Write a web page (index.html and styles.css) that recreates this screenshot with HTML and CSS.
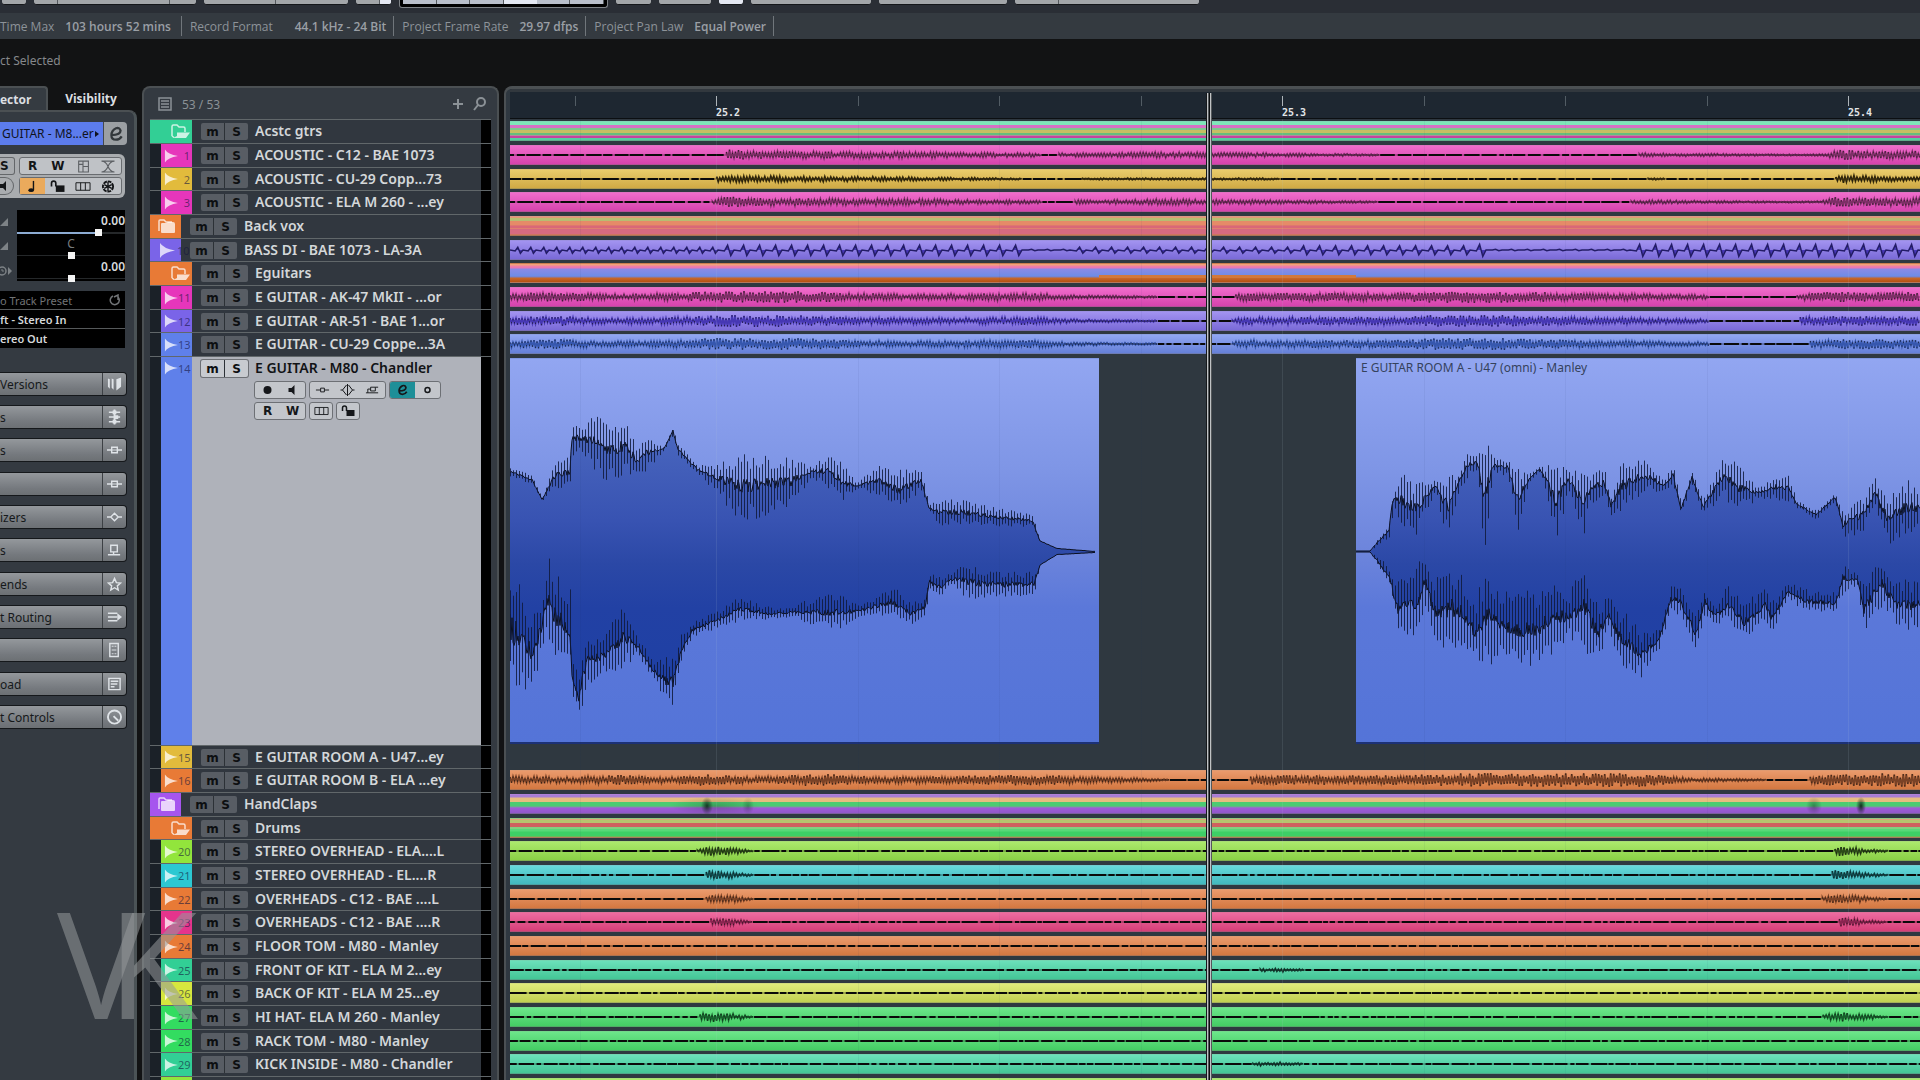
FILE: index.html
```html
<!DOCTYPE html>
<html lang="en">
<head>
    <meta charset="UTF-8">
    <meta name="viewport" content="width=device-width, initial-scale=1.0">
    <title>Project</title>
    <link rel="stylesheet" href="styles.css">
</head>
<body>
    <svg class="sprite" aria-hidden="true">
        <symbol id="i-wave" viewBox="0 0 15 14"><path d="M1 0Q4 5 15 7Q4 9 1 14Z" fill="currentColor"/></symbol>
        <symbol id="i-open" viewBox="0 0 20 15"><path d="M2 12V2.500Q2 1 3.500 1H7L9 3H13.500Q15 3 15 4.500V8M2 12L4 13.500" fill="none" stroke="currentColor" stroke-width="1.500"/><path d="M7 8.500H20L16 14H3L7 12Z" fill="currentColor"/></symbol>
        <symbol id="i-closed" viewBox="0 0 18 15"><path d="M1 12V2Q1 1 2 1H6L8 3H14" fill="none" stroke="currentColor" stroke-width="1.500"/><path d="M3 5Q3 4 4 4H8L10 3H15Q17 3 17 5V13Q17 14 16 14H4Q3 14 3 13Z" fill="currentColor"/></symbol>
        <symbol id="i-lock" viewBox="0 0 14 12"><path d="M1 6V3Q1 1 3 1T5 3V6" fill="none" stroke="currentColor" stroke-width="1.500"/><path d="M5 5H13V11H5Z" fill="currentColor"/></symbol>
        <symbol id="i-lanes" viewBox="0 0 17 10"><path d="M1 1H16V9H1ZM6 1V9M11 1V9" fill="none" stroke="currentColor"/></symbol>
        <symbol id="i-speaker" viewBox="0 0 12 12"><path d="M2 4H5L8 1V11L5 8H2Z" fill="currentColor"/></symbol>
        <symbol id="i-rec" viewBox="0 0 12 12"><circle cx="6" cy="6" r="4" fill="currentColor"/></symbol>
        <symbol id="i-insert" viewBox="0 0 16 12"><path d="M0 6H5M11 6H16M5 3H11V9H5Z" fill="none" stroke="currentColor" stroke-width="1.500"/><path d="M5 6H11" stroke="currentColor"/></symbol>
        <symbol id="i-insertline" viewBox="0 0 16 12"><path d="M1 6H6M10 6H15M6 4H10V8H6Z" fill="none" stroke="currentColor"/></symbol>
        <symbol id="i-eq" viewBox="0 0 16 12"><path d="M0 6H4M12 6H16M4 6L8 2L12 6L8 10Z" fill="none" stroke="currentColor" stroke-width="1.500"/></symbol>
        <symbol id="i-eqline" viewBox="0 0 14 12"><path d="M0 6H2M12 6H14M7 0V12M6 1L2 6L6 11M8 1L12 6L8 11" fill="none" stroke="currentColor"/></symbol>
        <symbol id="i-send" viewBox="0 0 16 12"><path d="M4 1H11V8H4ZM7 8V11M1 11H14" fill="none" stroke="currentColor" stroke-width="1.500"/></symbol>
        <symbol id="i-sendline" viewBox="0 0 16 12"><path d="M1 9H14M3 9V5H6M6 3H11V7H6ZM11 3H14" fill="none" stroke="currentColor"/></symbol>
        <symbol id="i-ring" viewBox="0 0 12 12"><circle cx="6" cy="6" r="2.500" fill="none" stroke="currentColor" stroke-width="1.500"/></symbol>
        <symbol id="i-edit" viewBox="0 0 14 14"><path d="M3 8Q11 8 11 4Q10 1 7 2Q3 4 3 8Q3 12 7 12Q10 12 12 9" fill="none" stroke="currentColor" stroke-width="2"/></symbol>
    </svg>

    <div class="toolbar">
        <span class="tool w24"></span>
        <span class="tool w162"><i class="w24"></i><i class="w112"></i></span>
        <span class="tool w144"><i class="w72"></i></span>
        <span class="tool w35"><i class="w24"></i><b></b></span>
        <span class="tool framed"><i></i><i></i><i></i><b></b><i></i><i></i></span>
        <span class="tool w35"></span>
        <span class="tool w52"></span>
        <span class="tool w24 lit"></span>
        <span class="tool w120"></span>
        <span class="tool w128"></span>
        <span class="tool w184"><i class="w44"></i></span>
    </div>

    <dl class="infoline">
        <div><dt>Time Max</dt><dd>103 hours 52 mins</dd></div>
        <div><dt>Record Format</dt><dd class="far">44.1 kHz - 24 Bit</dd></div>
        <div><dt>Project Frame Rate</dt><dd>29.97 dfps</dd></div>
        <div><dt>Project Pan Law</dt><dd>Equal Power</dd></div>
    </dl>
    <div class="selection">ct Selected</div>

    <main class="workspace">
        <aside class="inspector">
            <nav class="tabs">
                <button class="tab active">ector</button>
                <button class="tab">Visibility</button>
            </nav>
            <div class="inspector-body">
                <div class="title">
                    <button class="title-name">GUITAR - M8...er<span class="arrow"></span></button>
                    <button class="title-edit" aria-label="Edit"><svg><use href="#i-edit"/></svg></button>
                </div>
                <div class="modes">
                    <div class="mode-side">
                        <button class="solo">S</button>
                        <button class="monitor" aria-label="Monitor"><svg><use href="#i-speaker"/></svg></button>
                    </div>
                    <div class="mode-main">
                        <div class="mode-row">
                            <button>R</button>
                            <button>W</button>
                            <button class="dim" aria-label="Layout"><svg viewBox="0 0 12 12"><path d="M2 1H11V11H2ZM6 1V11M6 6H11M2 4H6" fill="none" stroke="currentColor"/></svg></button>
                            <button class="dim" aria-label="Crossfade"><svg viewBox="0 0 14 12"><path d="M1 1H13M1 11H13M1 1Q5 1 7 6T13 11M13 1Q9 1 7 6T1 11" fill="none" stroke="currentColor"/></svg></button>
                        </div>
                        <div class="mode-row">
                            <button class="on" aria-label="Musical"><svg viewBox="0 0 12 14"><ellipse cx="4" cy="11" rx="3" ry="2" fill="currentColor"/><path d="M6.500 11V1" stroke="currentColor" stroke-width="1.500"/></svg></button>
                            <button aria-label="Lock"><svg><use href="#i-lock"/></svg></button>
                            <button aria-label="Lanes"><svg><use href="#i-lanes"/></svg></button>
                            <button aria-label="Freeze"><svg viewBox="0 0 14 14"><circle cx="7" cy="7" r="5.500" fill="none" stroke="currentColor" stroke-width="2" stroke-dasharray="4 1"/><path d="M7 2V12M3 5L11 9M11 5L3 9" stroke="currentColor" stroke-width="1.500"/></svg></button>
                        </div>
                    </div>
                </div>
                <div class="fader">
                    <div class="fader-icons">
                        <svg viewBox="0 0 8 8"><path d="M0 8L8 0V8Z" fill="currentColor"/></svg>
                        <svg viewBox="0 0 8 8"><path d="M0 8L8 0V8Z" fill="currentColor"/></svg>
                        <svg class="wide" viewBox="0 0 12 10"><circle cx="2" cy="5" r="4" fill="none" stroke="currentColor" stroke-width="1.500"/><path d="M2 3V5H4" stroke="currentColor" fill="none"/><path d="M8 1L12 5L8 9Z" fill="currentColor"/></svg>
                    </div>
                    <div class="fader-box">
                        <label for="volume">0.00</label>
                        <input type="range" id="volume" class="filled" min="0" max="100" value="77">
                        <label for="pan" class="mid">C</label>
                        <input type="range" id="pan" min="0" max="100" value="50">
                        <label for="delay">0.00</label>
                        <input type="range" id="delay" min="0" max="100" value="50">
                    </div>
                </div>
                <div class="routing">
                    <button class="off">o Track Preset<svg viewBox="0 0 12 12"><path d="M4 2A4.500 4.500 0 1 0 9 3M9 6V1L5 3" fill="none" stroke="currentColor" stroke-width="1.500"/></svg></button>
                    <button>ft - Stereo In</button>
                    <button>ereo Out</button>
                </div>
                <div class="sections">
                    <button><span>Versions</span><svg viewBox="0 0 16 16"><path d="M1 2L3 3V13L1 11ZM5 2L7 3V14L5 12ZM10 3L15 1V11L10 15Z" fill="currentColor"/></svg></button>
                    <button><span>s</span><svg viewBox="0 0 16 16"><path d="M2 3H14M2 8H14M2 13H14" stroke="currentColor" stroke-width="1.500"/><path d="M6 1H10V5H6ZM8 6H12V10H8ZM6 11H10V15H6ZM7 0H9V16H7Z" fill="currentColor"/></svg></button>
                    <button><span>s</span><svg><use href="#i-insert"/></svg></button>
                    <button aria-label="Strip"><span></span><svg><use href="#i-insert"/></svg></button>
                    <button><span>izers</span><svg><use href="#i-eq"/></svg></button>
                    <button><span>s</span><svg><use href="#i-send"/></svg></button>
                    <button><span>ends</span><svg viewBox="0 0 16 16"><path d="M8 2L10 6.500L14.500 7L11 10L12 14.500L8 12L4 14.500L5 10L1.500 7L6 6.500Z" fill="none" stroke="currentColor" stroke-width="1.500"/></svg></button>
                    <button><span>t Routing</span><svg viewBox="0 0 16 14"><path d="M1 3H11M1 7H11M1 11H11" stroke="currentColor" stroke-width="1.500"/><path d="M11 3L16 7L11 11Z" fill="currentColor"/></svg></button>
                    <button aria-label="Channel"><span></span><svg viewBox="0 0 16 16"><path d="M3 1H12V15H3Z" fill="none" stroke="currentColor" stroke-width="1.500"/><path d="M5 8H10M5 4H7M8 4H10M5 12H7M8 12H10" stroke="currentColor"/></svg></button>
                    <button><span>oad</span><svg viewBox="0 0 16 16"><path d="M2 2H14V14H2Z" fill="none" stroke="currentColor" stroke-width="1.500"/><path d="M4 5H12M4 8H11M4 11H8" stroke="currentColor" stroke-width="1.500"/></svg></button>
                    <button><span>t Controls</span><svg viewBox="0 0 16 16"><circle cx="8" cy="8" r="7" fill="none" stroke="currentColor" stroke-width="2"/><path d="M7 7L12 12" stroke="currentColor" stroke-width="2"/></svg></button>
                </div>
            </div>
        </aside>

        <section class="tracklist">
            <header class="list-head">
                <svg viewBox="0 0 14 14"><path d="M1 1H13V13H1ZM3 4H11M3 7H11M3 10H11" fill="none" stroke="currentColor" stroke-width="1.500"/></svg>
                <span class="count">53 / 53</span>
                <button aria-label="Add track"><svg viewBox="0 0 14 14"><path d="M7 2V12M2 7H12" stroke="currentColor" stroke-width="2"/></svg></button>
                <button aria-label="Find track"><svg viewBox="0 0 14 14"><circle cx="8" cy="5" r="4" fill="none" stroke="currentColor" stroke-width="2"/><path d="M5 8L1 13" stroke="currentColor" stroke-width="2"/></svg></button>
            </header>
            <div class="rows">
                <div class="track folder teal"><span class="tag"><svg><use href="#i-open"/></svg></span><span class="ms"><button>m</button><button>S</button></span><span class="name">Acstc gtrs</span></div>
                <div class="track magenta"><span class="tag"><svg><use href="#i-wave"/></svg>1</span><span class="ms"><button>m</button><button>S</button></span><span class="name">ACOUSTIC - C12 - BAE 1073</span></div>
                <div class="track yellow"><span class="tag"><svg><use href="#i-wave"/></svg>2</span><span class="ms"><button>m</button><button>S</button></span><span class="name">ACOUSTIC - CU-29 Copp...73</span></div>
                <div class="track magenta"><span class="tag"><svg><use href="#i-wave"/></svg>3</span><span class="ms"><button>m</button><button>S</button></span><span class="name">ACOUSTIC - ELA M 260 - ...ey</span></div>
                <div class="track root orange"><span class="tag"><svg><use href="#i-closed"/></svg></span><span class="ms"><button>m</button><button>S</button></span><span class="name">Back vox</span></div>
                <div class="track root purple"><span class="tag"><svg><use href="#i-wave"/></svg>10</span><span class="ms"><button>m</button><button>S</button></span><span class="name">BASS DI - BAE 1073 - LA-3A</span></div>
                <div class="track folder orange"><span class="tag"><svg><use href="#i-open"/></svg></span><span class="ms"><button>m</button><button>S</button></span><span class="name">Eguitars</span></div>
                <div class="track magenta"><span class="tag"><svg><use href="#i-wave"/></svg>11</span><span class="ms"><button>m</button><button>S</button></span><span class="name">E GUITAR - AK-47 MkII - ...or</span></div>
                <div class="track purple"><span class="tag"><svg><use href="#i-wave"/></svg>12</span><span class="ms"><button>m</button><button>S</button></span><span class="name">E GUITAR - AR-51 - BAE 1...or</span></div>
                <div class="track blue"><span class="tag"><svg><use href="#i-wave"/></svg>13</span><span class="ms"><button>m</button><button>S</button></span><span class="name">E GUITAR - CU-29 Coppe...3A</span></div>
                <div class="track selected blue">
                    <span class="tag"><svg><use href="#i-wave"/></svg>14</span>
                    <span class="ms"><button>m</button><button>S</button></span>
                    <div class="detail">
                        <span class="name">E GUITAR - M80 - Chandler</span>
                        <div class="controls">
                            <span class="group"><button aria-label="Record"><svg><use href="#i-rec"/></svg></button><button aria-label="Monitor"><svg><use href="#i-speaker"/></svg></button></span>
                            <span class="group"><button aria-label="Inserts"><svg><use href="#i-insertline"/></svg></button><button aria-label="EQ"><svg><use href="#i-eqline"/></svg></button><button aria-label="Sends"><svg><use href="#i-sendline"/></svg></button></span>
                            <span class="group"><button class="edit" aria-label="Edit channel"><svg><use href="#i-edit"/></svg></button><button aria-label="Channels"><svg><use href="#i-ring"/></svg></button></span>
                        </div>
                        <div class="controls">
                            <span class="group"><button>R</button><button>W</button></span>
                            <span class="group"><button aria-label="Lanes"><svg><use href="#i-lanes"/></svg></button></span>
                            <span class="group"><button aria-label="Lock"><svg><use href="#i-lock"/></svg></button></span>
                        </div>
                    </div>
                </div>
                <div class="track yellow"><span class="tag"><svg><use href="#i-wave"/></svg>15</span><span class="ms"><button>m</button><button>S</button></span><span class="name">E GUITAR ROOM A - U47...ey</span></div>
                <div class="track orange"><span class="tag"><svg><use href="#i-wave"/></svg>16</span><span class="ms"><button>m</button><button>S</button></span><span class="name">E GUITAR ROOM B - ELA ...ey</span></div>
                <div class="track root violet"><span class="tag"><svg><use href="#i-closed"/></svg></span><span class="ms"><button>m</button><button>S</button></span><span class="name">HandClaps</span></div>
                <div class="track folder orange"><span class="tag"><svg><use href="#i-open"/></svg></span><span class="ms"><button>m</button><button>S</button></span><span class="name">Drums</span></div>
                <div class="track lime"><span class="tag"><svg><use href="#i-wave"/></svg>20</span><span class="ms"><button>m</button><button>S</button></span><span class="name">STEREO OVERHEAD - ELA....L</span></div>
                <div class="track cyan"><span class="tag"><svg><use href="#i-wave"/></svg>21</span><span class="ms"><button>m</button><button>S</button></span><span class="name">STEREO OVERHEAD - EL....R</span></div>
                <div class="track orange"><span class="tag"><svg><use href="#i-wave"/></svg>22</span><span class="ms"><button>m</button><button>S</button></span><span class="name">OVERHEADS - C12 - BAE ....L</span></div>
                <div class="track rose"><span class="tag"><svg><use href="#i-wave"/></svg>23</span><span class="ms"><button>m</button><button>S</button></span><span class="name">OVERHEADS - C12 - BAE ....R</span></div>
                <div class="track orange"><span class="tag"><svg><use href="#i-wave"/></svg>24</span><span class="ms"><button>m</button><button>S</button></span><span class="name">FLOOR TOM - M80 - Manley</span></div>
                <div class="track teal"><span class="tag"><svg><use href="#i-wave"/></svg>25</span><span class="ms"><button>m</button><button>S</button></span><span class="name">FRONT OF KIT - ELA M 2...ey</span></div>
                <div class="track lemon"><span class="tag"><svg><use href="#i-wave"/></svg>26</span><span class="ms"><button>m</button><button>S</button></span><span class="name">BACK OF KIT - ELA M 25...ey</span></div>
                <div class="track green"><span class="tag"><svg><use href="#i-wave"/></svg>27</span><span class="ms"><button>m</button><button>S</button></span><span class="name">HI HAT- ELA M 260 - Manley</span></div>
                <div class="track green"><span class="tag"><svg><use href="#i-wave"/></svg>28</span><span class="ms"><button>m</button><button>S</button></span><span class="name">RACK TOM - M80 - Manley</span></div>
                <div class="track teal"><span class="tag"><svg><use href="#i-wave"/></svg>29</span><span class="ms"><button>m</button><button>S</button></span><span class="name">KICK INSIDE - M80 - Chandler</span></div>
                <div class="track lime"><span class="tag"></span></div>
            </div>
        </section>

        <section class="timeline">
            <div class="ruler">
                <div class="beat"><i></i><i></i><i></i><i></i></div>
                <div class="beat"><i>25.2</i><i></i><i></i><i></i></div>
                <div class="beat"><i>25.3</i><i></i><i></i><i></i></div>
                <div class="beat"><i>25.4</i><i></i><i></i><i></i></div>
            </div>
            <div class="lanes">
                <div class="lane"><div class="clip mix-acoustic"></div></div>
                <div class="lane magenta"><div class="clip" data-wave="acoustic"></div></div>
                <div class="lane yellow"><div class="clip" data-wave="acousticSoft"></div></div>
                <div class="lane magenta"><div class="clip" data-wave="acoustic"></div></div>
                <div class="lane"><div class="clip mix-vox"></div></div>
                <div class="lane purple"><div class="clip" data-wave="bass"></div></div>
                <div class="lane"><div class="clip mix-guitars"></div></div>
                <div class="lane magenta"><div class="clip" data-wave="guitar"></div></div>
                <div class="lane purple"><div class="clip" data-wave="guitar"></div></div>
                <div class="lane blue"><div class="clip" data-wave="guitar"></div></div>
                <div class="lane tall blue">
                    <div class="clip first" data-shape="takeOne"></div>
                    <div class="clip second" data-shape="takeTwo"><span class="clip-name">E GUITAR ROOM A - U47 (omni) - Manley</span></div>
                </div>
                <div class="lane"></div>
                <div class="lane orange"><div class="clip" data-wave="room"></div></div>
                <div class="lane"><div class="clip mix-claps"></div></div>
                <div class="lane"><div class="clip mix-drums"></div></div>
                <div class="lane lime"><div class="clip" data-wave="overhead"></div></div>
                <div class="lane cyan"><div class="clip" data-wave="overhead"></div></div>
                <div class="lane orange"><div class="clip" data-wave="overhead"></div></div>
                <div class="lane rose"><div class="clip" data-wave="overhead"></div></div>
                <div class="lane orange"><div class="clip" data-wave="quiet"></div></div>
                <div class="lane teal"><div class="clip" data-wave="kit"></div></div>
                <div class="lane lemon"><div class="clip" data-wave="quiet"></div></div>
                <div class="lane green"><div class="clip" data-wave="overhead"></div></div>
                <div class="lane green"><div class="clip" data-wave="quiet"></div></div>
                <div class="lane teal"><div class="clip" data-wave="kit"></div></div>
                <div class="lane lime"><div class="clip"></div></div>
            </div>
            <div class="playhead"></div>
        </section>
    </main>

    <div class="watermark"><span>V</span><span>K</span></div>

    <script src="script.js"></script>
</body>
</html>
```

FILE: styles.css
```css
* {
    box-sizing: border-box;
}
body {
    margin: 0;
    height: 100vh;
    display: flex;
    flex-direction: column;
    overflow: hidden;
    background: #121314;
    color: #d5d8db;
    font-family: "Noto Sans", "Open Sans", sans-serif;
    font-size: 12px;
}
button {
    margin: 0;
    padding: 0;
    border: 0;
    background: none;
    color: inherit;
    font: inherit;
}
svg {
    display: block;
    flex: none;
}
.sprite {
    display: none;
}

/* colours of the tracks: tag, clip top, clip bottom, waveform */
.teal { --tag: #32cf95; --top: #6be0ba; --bottom: #44c696; --wave: #123f33; }
.magenta { --tag: #e636bb; --top: #f06ccb; --bottom: #d543ad; --wave: #7d2f66; }
.yellow { --tag: #e2bb3c; --top: #e9cc6b; --bottom: #d0aa45; --wave: #3a2e0c; }
.orange { --tag: #e87a36; --top: #ea9a6c; --bottom: #d47841; --wave: #7a4226; }
.purple { --tag: #7a64e8; --top: #a293f0; --bottom: #7a6ad8; --wave: #4637b4; }
.blue { --tag: #5f80ea; --top: #91a6f2; --bottom: #6580d8; --wave: #3657ae; }
.violet { --tag: #a655ee; }
.lime { --tag: #92e53c; --top: #abe96c; --bottom: #8ad046; --wave: #2c4a18; }
.cyan { --tag: #2cc8d2; --top: #66d8da; --bottom: #42b9be; --wave: #10494c; }
.rose { --tag: #e5348c; --top: #ee6ba0; --bottom: #d63f78; --wave: #8a2450; }
.lemon { --tag: #d6e63e; --top: #dfeb7a; --bottom: #c2d052; --wave: #4a5018; }
.green { --tag: #33dc60; --top: #6ce68a; --bottom: #44cc64; --wave: #17602c; }

/* bottom edge of the toolbar */
.toolbar {
    display: flex;
    gap: 8px;
    height: 13px;
    padding-left: 2px;
    background: #2a2e35;
}
.tool {
    display: flex;
    height: 5px;
    background: #a3a6a9;
    border-bottom: 1px solid #15171a;
    border-radius: 0 0 3px 3px;
    overflow: hidden;
}
.tool i {
    border-right: 1px solid #55595d;
}
.tool b {
    flex: 1;
    background: #e4e8f2;
}
.tool.lit {
    background: #e4e8f2;
}
.tool.framed {
    width: 209px;
    height: 8px;
    padding: 0 3px;
    background: #000;
    border: 1px solid #7f8387;
    border-top: 0;
}
.tool.framed i,
.tool.framed b {
    flex: 1;
    height: 4px;
    background: #b9bfca;
}
.tool.framed b {
    background: #e4e8f2;
}
.w24 { width: 24px; }
.w35 { width: 35px; }
.w44 { width: 44px; }
.w52 { width: 52px; }
.w72 { width: 72px; }
.w112 { width: 112px; }
.w120 { width: 120px; }
.w128 { width: 128px; }
.w144 { width: 144px; }
.w162 { width: 162px; }
.w184 { width: 184px; }

.infoline {
    display: flex;
    align-items: center;
    height: 26px;
    margin: 0;
    background: #343a40;
    color: #8d9399;
    font-family: "Open Sans", sans-serif;
}
.infoline div {
    display: flex;
    align-items: center;
    height: 20px;
    gap: 11px;
    padding: 0 7px 0 8px;
    border-right: 1px solid #70767b;
}
.infoline div:first-child {
    padding: 0 10px 0 0;
}
.infoline dd {
    margin: 0;
    font-weight: 600;
    color: #9a9fa5;
}
.infoline .far {
    margin-left: 11px;
}
.selection {
    height: 47px;
    line-height: 44px;
    color: #85888b;
}

.workspace {
    flex: 1;
    display: flex;
    gap: 5px;
    min-height: 0;
}

/* inspector */
.inspector {
    width: 137px;
    display: flex;
    flex-direction: column;
}
.tabs {
    display: flex;
    height: 24px;
}
.tab {
    width: 86px;
    color: #dcdfe1;
    font-family: "Open Sans", sans-serif;
    font-size: 12px;
    font-weight: 700;
}
.tab.active {
    width: 48px;
    padding-right: 20px;
    background: #353b41;
    border-top: 2px solid #4b5053;
    border-right: 2px solid #4b5053;
    border-radius: 0 4px 0 0;
}
.inspector-body {
    flex: 1;
    padding: 10px 7px 0 0;
    background: #343a41;
    border-top: 2px solid #4b5053;
    border-right: 3px solid #4b5356;
    border-radius: 0 8px 0 0;
}
.title {
    display: flex;
    height: 23px;
    border-radius: 0 4px 4px 0;
    overflow: hidden;
}
.title-name {
    flex: 1;
    display: flex;
    align-items: center;
    gap: 1px;
    padding-left: 2px;
    background: #5c7cec;
    color: #10131c;
    white-space: nowrap;
}
.arrow {
    border: 3px solid transparent;
    border-left: 4px solid #10131c;
    border-right: 0;
}
.title-edit {
    width: 24px;
    display: grid;
    place-items: center;
    background: #9b9fa3;
    border-left: 1px solid #44484c;
    color: #33383c;
}
.title-edit svg {
    width: 16px;
    height: 16px;
}
.modes {
    display: flex;
    gap: 4px;
    height: 44px;
    margin: 9px 2px 0 0;
    padding: 3px 3px 0 0;
    background: #a9acaf;
    border-radius: 0 6px 6px 0;
    color: #131517;
}
.mode-side {
    width: 15px;
}
.solo {
    width: 15px;
    height: 18px;
    padding-right: 7px;
    border: 1px solid #64676a;
    border-left: 0;
    border-radius: 0 3px 3px 0;
    font: 700 12px "DejaVu Sans", sans-serif;
}
.monitor {
    width: 14px;
    height: 18px;
    margin-top: 2px;
    border: 1px solid #64676a;
    border-left: 0;
    border-radius: 0 9px 9px 0;
}
.monitor svg {
    width: 12px;
    height: 12px;
    margin-left: -2px;
}
.mode-main {
    flex: 1;
    display: flex;
    flex-direction: column;
    gap: 2px;
}
.mode-row {
    display: flex;
    height: 18px;
    background: #bfc2c6;
    border: 1px solid #696c70;
    border-radius: 3px;
}
.mode-row button {
    flex: 1;
    display: grid;
    place-items: center;
    font: 700 12px "DejaVu Sans", sans-serif;
}
.mode-row svg {
    width: 16px;
    height: 13px;
}
.mode-row .dim {
    color: #5d6064;
}
.mode-row .on {
    background: #eaaa5c;
}
.fader {
    display: flex;
    margin: 12px 2px 0 0;
}
.fader-icons {
    width: 17px;
    display: flex;
    flex-direction: column;
    gap: 16px;
    padding-top: 8px;
    color: #7d8286;
}
.fader-icons svg {
    width: 8px;
    height: 8px;
}
.fader-icons .wide {
    width: 12px;
    height: 10px;
}
.fader-box {
    flex: 1;
    height: 71px;
    padding-top: 3px;
    background: #000;
}
.fader-box label {
    display: block;
    height: 16px;
    line-height: 16px;
    text-align: right;
    font-weight: 600;
}
.fader-box .mid {
    text-align: center;
    font-weight: 400;
    color: #777b7f;
}
.fader-box input {
    display: block;
    width: 100%;
    height: 7px;
    margin: 0;
    appearance: none;
    background: linear-gradient(#25282a, #25282a) 0 3px / 100% 1px no-repeat;
}
.fader-box input.filled {
    background: linear-gradient(90deg, #8cabd2 77%, #25282a 77%) 0 3px / 100% 2px no-repeat;
}
.fader-box input::-webkit-slider-thumb {
    appearance: none;
    width: 7px;
    height: 7px;
    background: #f4f4f4;
}
.routing {
    margin: 10px 2px 0 0;
    background: #000;
    color: #d5d8da;
}
.routing button {
    width: 100%;
    height: 19px;
    display: flex;
    align-items: center;
    justify-content: space-between;
    padding-right: 4px;
    border-bottom: 1px solid #56595b;
    white-space: nowrap;
    font-size: 11px;
    font-weight: 600;
}
.routing button:last-child {
    border-bottom: 0;
}
.routing .off {
    color: #717477;
    font-weight: 400;
}
.routing svg {
    width: 12px;
    height: 12px;
}
.sections {
    display: flex;
    flex-direction: column;
    gap: 9px;
    margin-top: 24px;
}
.sections button {
    height: 24px;
    display: flex;
    background: linear-gradient(#94989c, #75797e 70%, #6c7074);
    border: 1px solid #15181b;
    border-left: 0;
    border-radius: 0 4px 4px 0;
    color: #16191b;
    line-height: 23px;
    text-align: left;
    white-space: nowrap;
}
.sections button:nth-child(3n) {
    margin-bottom: 1px;
}
.sections span {
    flex: 1;
}
.sections svg {
    width: 24px;
    height: 22px;
    padding: 3px 4px;
    border-left: 1px solid #3d4145;
    color: #dfe3e7;
}

/* track list */
.tracklist {
    width: 357px;
    padding: 0 6px 0 6px;
    background: #343a41;
    border: 2px solid #4b5053;
    border-bottom: 0;
    border-radius: 8px 8px 0 0;
}
.list-head {
    display: flex;
    align-items: center;
    gap: 8px;
    height: 31px;
    padding: 1px 4px 0 8px;
    color: #8b9196;
}
.list-head svg {
    width: 14px;
    height: 14px;
}
.list-head .count {
    flex: 1;
    padding-left: 2px;
}
.rows {
    border-top: 1px solid #61676a;
}
.track {
    display: flex;
    height: 24px;
    padding-left: 11px;
    border-bottom: 1px solid #61676a;
    background: linear-gradient(90deg, transparent 331px, #000 331px), linear-gradient(90deg, #1b2128 11px, #31373f 11px);
}
/* the row pitch is a third of a pixel under 24 */
.track:nth-child(3n),
.lane:nth-child(3n) {
    height: 23px;
}
.track.folder,
.track.root {
    padding-left: 0;
}
.tag {
    width: 31px;
    display: flex;
    align-items: center;
    justify-content: space-between;
    padding: 0 2px 0 3px;
    background: var(--tag);
    color: rgba(20, 20, 60, 0.6);
    font-size: 11px;
}
.folder .tag {
    width: 42px;
    justify-content: flex-end;
}
.tag svg {
    width: 14px;
    height: 14px;
    color: rgba(255, 255, 255, 0.75);
}
.folder .tag svg,
.root .tag svg:only-child {
    width: 20px;
    height: 15px;
}
.root .tag svg:only-child {
    margin-left: 4px;
}
.ms {
    display: flex;
    height: 17px;
    margin: 3px 7px 0 9px;
    background: #585d64;
    border-radius: 2px;
    color: #0d0f11;
}
.ms button {
    width: 23px;
    font: 700 12px/16px "DejaVu Sans", sans-serif;
}
.ms button:first-child {
    width: 24px;
    border-right: 1px solid #2c3136;
}
.name {
    color: #d4d7da;
    font-size: 14px;
    line-height: 22px;
    font-weight: 600;
    white-space: nowrap;
}
.track.selected,
.lane.tall {
    height: 389px;
}
.track.selected {
    background: linear-gradient(90deg, #1b2128 11px, #afb2ba 11px, #afb2ba 331px, #000 331px);
}
.selected .tag {
    align-items: flex-start;
    padding-top: 4px;
}
.selected .ms {
    background: #c8cbd0;
    box-shadow: 0 0 0 1px #6d7075;
}
.selected .name {
    display: block;
    color: #111316;
}
.controls {
    display: flex;
    gap: 3px;
    margin: 2px 0 3px -1px;
}
.group {
    display: flex;
    height: 18px;
    background: #c3c6cb;
    border: 1px solid #6d7075;
    border-radius: 3px;
    overflow: hidden;
    color: #15171a;
}
.group button {
    width: 25px;
    display: grid;
    place-items: center;
    font: 700 12px "DejaVu Sans", sans-serif;
}
.group button:only-child {
    width: 22px;
}
.group svg {
    width: 15px;
    height: 12px;
}
.group .edit {
    background: #1e8f98;
}

/* timeline */
.timeline {
    position: relative;
    flex: 1;
    min-width: 0;
    padding-left: 4px;
    background: #2f3840;
    border: 2px solid #4b5053;
    border-width: 3px 0 0 2px;
    border-radius: 8px 0 0 0;
    overflow: hidden;
}
.ruler {
    display: flex;
    height: 30px;
    padding-top: 4px;
    background: #1e2731;
    border-top: 3px solid #32383e;
    border-bottom: 1px solid #0c0f12;
}
.beat {
    flex: none;
    display: flex;
    width: 566px;
}
.beat:first-child {
    margin-left: -360px;
}
.beat i {
    flex: 1;
    background: linear-gradient(#525c64, #525c64) 0 0 / 1px 10px no-repeat;
    padding-top: 11px;
    color: #e2e5e8;
    font: 700 10px/12px "DejaVu Sans Mono", monospace;
}
.beat i:first-child {
    background: linear-gradient(#aeb4b9, #aeb4b9) 0 0 / 1px 10px no-repeat;
}
.lanes {
    position: relative;
}
/* beat lines, faintly visible over the clips */
.lanes::after {
    content: "";
    position: absolute;
    inset: 0;
    background: repeating-linear-gradient(90deg, rgba(180, 200, 210, 0.12) 0 1px, transparent 1px 142px, rgba(20, 40, 90, 0.06) 142px 143px, transparent 143px 283px, rgba(20, 40, 90, 0.06) 283px 284px, transparent 284px 425px, rgba(20, 40, 90, 0.06) 425px 426px, transparent 426px 566px) 206px 0;
    pointer-events: none;
}
.lane {
    display: flex;
    height: 24px;
    padding-top: 2px;
}
.clip {
    flex: 1;
    height: 20px;
    min-width: 0;
    background: linear-gradient(var(--top), var(--bottom));
    border-top: 1px solid rgba(255, 255, 255, 0.25);
    border-bottom: 1px solid rgba(0, 0, 0, 0.25);
    overflow: hidden;
}
.clip svg {
    width: 100%;
    height: 100%;
}
.tall .clip {
    position: relative;
    height: 386px;
    background: linear-gradient(#92a6f1, #7f96e6 28%, #6d85dc 50%, #5b78d9 65%, #5474d8);
    border-bottom: 2px solid #1c3176;
}
.tall .first {
    flex: 0 0 589px;
}
.tall .second {
    margin-left: 257px;
}
.clip-name {
    position: absolute;
    left: 5px;
    top: 0;
    color: #35425c;
    line-height: 18px;
}
.mix-acoustic {
    background: linear-gradient(#7fe6b8 0 3px, #d770c4 3px 6px, #7cc98c 6px 8px, #c6bf62 8px 11px, #66bd7c 11px 13px, #b68a9d 13px 14px, #c5439f 14px 16px, #57cda0 16px 18px, #1f6a50 18px);
}
.mix-vox {
    background: linear-gradient(#e09a72 0 1px, #b6bd72 1px 4px, #e58b68 4px 8px, #de776f 8px 9px, #d96878 9px 11px, #e0806e 11px 12px, #d56a80 12px 17px, #cf745f 17px);
}
.mix-guitars {
    background: linear-gradient(#d2793c, #d2793c) 589px 11px / 257px 3px no-repeat, linear-gradient(#f2a07c 0 1px, #f082a4 2px, #e775b8 4px, #8a8ae6 5px, #6f8ce6 12px, #7a7fc0 13px, #c8692a 14px, #b9561a 17px, #b5500f);
}
.mix-claps {
    background:
        radial-gradient(closest-side, rgba(10, 30, 20, 0.8), transparent) 191px 2px / 12px 18px no-repeat,
        radial-gradient(closest-side, rgba(10, 30, 20, 0.3), transparent) 232px 2px / 12px 18px no-repeat,
        radial-gradient(closest-side, rgba(10, 30, 20, 0.25), transparent) 160px 2px / 90px 18px no-repeat,
        radial-gradient(closest-side, rgba(10, 30, 20, 0.4), transparent) 1296px 2px / 16px 18px no-repeat,
        radial-gradient(closest-side, rgba(10, 30, 20, 0.9), transparent) 1346px 2px / 10px 18px no-repeat,
        linear-gradient(#a77ed2 0 2px, #e6bd80 3px 7px, #4ccb72 7px 11px, #7f93a8 12px, #a05cd6 13px, #9257ca 18px);
}
.mix-drums {
    background: linear-gradient(#e3a277 0 1px, #b7c46e 1px 4px, #d0605f 4px 8px, #84cf80 8px 10px, #58d878 10px 12px, #3ecf66 13px 17px, #99a34a 18px);
}
.playhead {
    position: absolute;
    top: 4px;
    bottom: 0;
    left: 700px;
    width: 6px;
    background: linear-gradient(90deg, #15181b 0 1px, #c0c3c5 1px 2px, #54585b 2px 3px, #0c0e10 3px 4px, #c0c3c5 4px 5px, #54585b 5px);
}

.watermark {
    position: absolute;
    left: 57px;
    bottom: 20px;
    color: rgba(150, 153, 155, 0.55);
    font: 148px/196px "Open Sans", sans-serif;
    pointer-events: none;
}
.watermark span + span {
    margin-left: -38px;
}
```

FILE: script.js
```js
// envelopes of the small lanes: [x, half height]
const WAVES = {
    acoustic: [[0, 0], [198, 0], [208, 4], [220, 6], [240, 4], [400, 3], [528, 2], [532, 0], [545, 0], [550, 2], [600, 2], [640, 3], [760, 2], [860, 1], [880, 0], [1110, 0], [1130, 2], [1250, 1], [1310, 1], [1330, 6], [1350, 4], [1500, 4]],
    acousticSoft: [[0, 0], [198, 0], [205, 3], [280, 3], [400, 2], [500, 1], [530, 0], [600, 1], [760, 1], [780, 0], [1130, 0], [1140, 1], [1180, 0], [1315, 0], [1330, 4], [1390, 2], [1500, 2]],
    guitar: [[0, 4], [50, 5], [90, 3], [180, 4], [190, 6], [290, 6], [340, 4], [420, 3], [520, 4], [560, 2], [645, 1], [650, 0], [718, 0], [730, 4], [880, 4], [920, 6], [1000, 6], [1060, 4], [1140, 3], [1198, 2], [1200, 0], [1285, 0], [1290, 4], [1320, 5], [1500, 5]],
    room: [[0, 4], [60, 3], [110, 5], [160, 3], [190, 6], [250, 3], [290, 6], [330, 6], [370, 3], [440, 4], [500, 6], [600, 3], [655, 1], [660, 0], [722, 0], [730, 4], [770, 5], [900, 5], [960, 7], [1050, 7], [1130, 7], [1180, 2], [1250, 1], [1260, 0], [1292, 0], [1300, 5], [1380, 7], [1500, 5]],
    overhead: [[0, 0], [186, 0], [190, 3], [200, 5], [225, 3], [240, 1], [246, 0], [1310, 0], [1314, 3], [1328, 5], [1350, 3], [1374, 1], [1380, 0], [1500, 0]],
    quiet: [[0, 0], [1500, 0]],
    kit: [[0, 0], [740, 0], [748, 2], [760, 1], [770, 2], [790, 1], [800, 0], [1500, 0]]
};

// outer and inner edges of the two large takes: [x, outer, inner]
const SHAPES = {
    takeOne: {
        up: [[0, 109, 117], [22, 117, 125], [32, 139, 142], [45, 105, 128], [60, 100, 128], [62, 62, 95], [71, 69, 92], [84, 60, 108], [97, 67, 120], [115, 65, 112], [127, 89, 115], [138, 80, 108], [154, 88, 91], [163, 68, 76], [168, 86, 96], [188, 107, 115], [204, 107, 130], [227, 101, 155], [251, 100, 155], [281, 102, 145], [302, 108, 118], [320, 95, 130], [334, 110, 140], [346, 124, 130], [370, 108, 135], [389, 113, 150], [411, 113, 130], [419, 146, 152], [429, 142, 165], [455, 143, 165], [496, 152, 167], [522, 155, 168], [530, 181, 183], [547, 189, 190], [585, 192, 193]],
        down: [[0, 325, 205], [22, 325, 260], [32, 292, 242], [38, 275, 202], [45, 292, 218], [60, 308, 232], [62, 332, 305], [69, 360, 312], [77, 322, 275], [93, 312, 282], [113, 305, 249], [127, 295, 279], [138, 312, 295], [148, 328, 305], [157, 345, 295], [163, 342, 302], [172, 302, 275], [182, 277, 265], [208, 268, 252], [231, 260, 239], [259, 260, 249], [283, 257, 249], [304, 267, 239], [326, 269, 235], [348, 257, 247], [382, 255, 229], [401, 264, 245], [415, 258, 239], [419, 232, 212], [429, 237, 219], [441, 225, 215], [457, 237, 205], [472, 237, 212], [524, 235, 215], [530, 207, 205], [547, 196, 195], [585, 194, 193]]
    },
    takeTwo: {
        up: [[0, 192, 192], [14, 192, 192], [23, 178, 185], [33, 165, 178], [37, 130, 152], [46, 119, 168], [60, 127, 175], [79, 122, 132], [92, 120, 180], [101, 120, 135], [111, 95, 118], [120, 94, 112], [129, 89, 188], [138, 99, 115], [152, 102, 115], [161, 115, 172], [173, 115, 125], [184, 108, 112], [200, 109, 178], [212, 110, 132], [228, 119, 173], [235, 117, 142], [248, 110, 139], [255, 139, 155], [267, 102, 152], [290, 102, 132], [308, 122, 132], [317, 107, 125], [325, 145, 155], [336, 112, 125], [347, 142, 155], [368, 99, 135], [379, 107, 152], [402, 129, 139], [421, 117, 139], [433, 119, 142], [441, 142, 149], [460, 152, 160], [479, 135, 142], [487, 155, 177], [505, 142, 172], [519, 119, 152], [531, 139, 182], [551, 125, 172], [570, 132, 168]],
        down: [[0, 193, 193], [14, 193, 193], [23, 209, 199], [33, 225, 209], [42, 272, 225], [60, 272, 212], [69, 245, 199], [79, 279, 225], [92, 289, 202], [108, 282, 225], [118, 294, 249], [131, 302, 209], [145, 292, 239], [166, 302, 235], [182, 299, 239], [198, 289, 222], [212, 275, 239], [228, 285, 209], [242, 299, 245], [253, 269, 242], [262, 299, 249], [284, 316, 275], [303, 289, 272], [315, 249, 229], [324, 255, 229], [340, 289, 259], [349, 252, 232], [359, 269, 245], [372, 259, 229], [388, 279, 245], [409, 259, 232], [416, 272, 245], [432, 239, 225], [450, 252, 232], [480, 252, 235], [487, 232, 205], [501, 225, 215], [508, 272, 225], [526, 245, 202], [540, 265, 225], [570, 269, 222]]
    }
};

let seed = 7;
function random() {
    seed = (seed * 16807) % 2147483647;
    return seed / 2147483647;
}

// value of column k of the points at x
function at(points, x, k) {
    let i = 1;
    while (i < points.length - 1 && points[i][0] < x) i++;
    const a = points[i - 1], b = points[i];
    const t = Math.min(1, Math.max(0, (x - a[0]) / (b[0] - a[0])));
    return a[k] + (b[k] - a[k]) * t;
}

function draw(clip, content) {
    clip.insertAdjacentHTML('afterbegin', `<svg aria-hidden="true">${content}</svg>`);
}

function drawLane(clip, points, width) {
    let line = '', noise = 'M0 9', tips = '';
    for (let x = 0; x < width;) {
        const amp = at(points, x, 1);
        if (amp < 0.6) {
            const run = 4 + random() * 14;
            line += `M${x} 9H${x + run}`;
            x += run + 1 + random() * 2;
            noise += `M${x} 9`;
        } else {
            const top = 9 - amp * (0.3 + random() * 0.7);
            const bottom = 9 + amp * (0.3 + random() * 0.7);
            noise += `L${x} ${top}L${x + 1.5} ${bottom}`;
            tips += `M${x} ${top}v1.5M${x + 1.5} ${bottom}v-1.5`;
            x += 3;
        }
    }
    draw(clip, `<path d="M0 9H${width}" stroke="#000" opacity="0.45"/>
        <path d="${noise}" fill="none" stroke="var(--wave)" stroke-width="1.7"/>
        <path d="${tips}" stroke="#111" opacity="0.6"/>
        <path d="${line}" stroke="#0a0a0a" stroke-width="2"/>`);
}

function drawBass(clip, width) {
    let d = 'M0 9';
    for (let x = 0; x < width;) {
        const quiet = (x > 505 && x < 560) || (x > 970 && x < 1110);
        const amp = quiet ? 1 : x < 205 ? 4 : x < 505 ? 7 : x < 770 ? 4 : x < 950 ? 6 : 8;
        const step = x < 205 ? 13 : 16;
        d += `L${x + step * 0.4} ${9 + (quiet ? 0 : 1)}L${x + step * 0.6} ${9 - amp * 0.7}L${x + step * 0.8} ${9 + amp * 0.8}L${x + step} 9`;
        x += step;
    }
    draw(clip, `<path d="${d}" fill="var(--wave)" stroke="#231c66" stroke-width="1.5"/>`);
}

function drawTake(clip, shape, width) {
    const edge = { up: [], down: [] };
    let spikes = '';
    for (const side of ['up', 'down']) {
        for (let x = 0; x <= width; x += 1) {
            const outer = at(shape[side], x, 1), inner = at(shape[side], x, 2);
            const body = outer + (inner - outer) * (0.35 + random() * 0.25);
            edge[side].push(`${x} ${body.toFixed(1)}`);
            if (x % 3 === 0 && Math.abs(outer - inner) > 3) {
                const from = outer + (inner - outer) * (random() * 0.3 - 0.1);
                const to = inner - (inner - outer) * (random() * 0.35 - 0.1);
                spikes += `M${x + 0.5} ${from.toFixed(1)}V${to.toFixed(1)}`;
            }
        }
    }
    draw(clip, `<defs><linearGradient id="body" gradientUnits="userSpaceOnUse" x1="0" y1="60" x2="0" y2="350">
            <stop offset="0" stop-color="#4c69c0"/><stop offset="0.35" stop-color="#3853b2"/>
            <stop offset="0.5" stop-color="#2b48a6"/><stop offset="0.65" stop-color="#2241a4"/><stop offset="1" stop-color="#1d3fa4"/>
        </linearGradient></defs>
        <path d="M${edge.up.join('L')}L${edge.down.slice().reverse().join('L')}Z" fill="url(#body)"/>
        <path d="M${edge.up.join('L')}M${edge.down.join('L')}" fill="none" stroke="#0b1020" stroke-width="1"/>
        <path d="${spikes}" stroke="#101a3a" stroke-width="1" opacity="0.85"/>`);
}

document.querySelectorAll('[data-wave]').forEach(clip => {
    const width = clip.clientWidth;
    if (clip.dataset.wave === 'bass') {
        drawBass(clip, width);
    } else {
        drawLane(clip, WAVES[clip.dataset.wave], width);
    }
});
document.querySelectorAll('[data-shape]').forEach(clip => {
    const points = SHAPES[clip.dataset.shape];
    const last = points.up[points.up.length - 1][0];
    drawTake(clip, points, Math.min(clip.clientWidth, last));
});
```
